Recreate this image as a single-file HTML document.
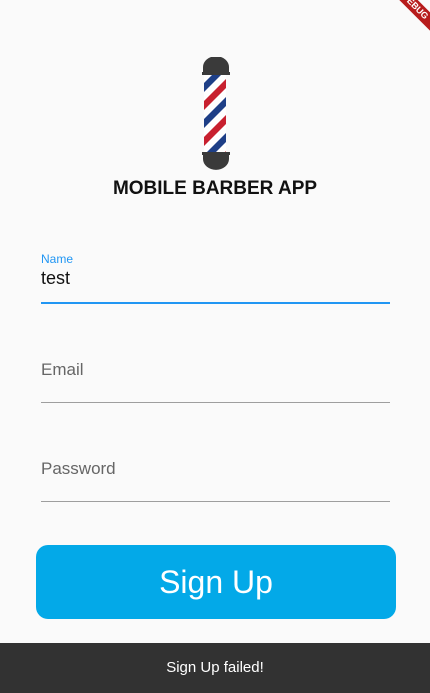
<!DOCTYPE html>
<html><head><style>
body{margin:0;width:430px;height:693px;background:#fafafa;position:relative;overflow:hidden;font-family:"Liberation Sans",sans-serif}
.t{position:absolute;left:0;width:430px;text-align:center;top:178px;font-weight:bold;font-size:19px;color:#111}
.lbl{position:absolute;left:41px;color:#666;font-size:17px}
.line{position:absolute;left:41px;width:349px;height:1px;background:#9e9e9e}
.btn{position:absolute;left:36px;top:545px;width:360px;height:74px;background:#03a9e8;border-radius:12px;color:#fff;font-size:32px;text-align:center;line-height:74px}
.snack{position:absolute;left:0;top:643px;width:430px;height:50px;background:#323232;color:#fff;font-size:15px;text-align:center;line-height:50px}
</style></head><body>
<svg style="position:absolute;left:200px;top:57px" width="32" height="113" viewBox="0 0 32 113">
<defs><clipPath id="c"><rect x="4" y="18" width="22" height="78"/></clipPath></defs>
<path d="M3 16 V10 A12 10 0 0 1 29 10 V16 Z" fill="#3a3a3a"/>
<rect x="2" y="15" width="28" height="3" fill="#3a3a3a"/>
<rect x="4" y="18" width="22" height="78" fill="#fff"/>
<g clip-path="url(#c)">
<polygon points="0,30 26,4 26,13 0,39" fill="#1e3f87"/>
<polygon points="0,48 26,22 26,31 0,57" fill="#c8202f"/>
<polygon points="0,66 26,40 26,49 0,75" fill="#1e3f87"/>
<polygon points="0,84 26,58 26,67 0,93" fill="#c8202f"/>
<polygon points="0,102 26,76 26,85 0,111" fill="#1e3f87"/>
<polygon points="0,120 26,94 26,103 0,129" fill="#c8202f"/>
</g>
<rect x="2" y="95" width="28" height="3" fill="#3a3a3a"/>
<path d="M3 98 H29 V102 A12 10 0 0 1 3 102 Z" fill="#3a3a3a"/>
</svg>
<div class="t">MOBILE BARBER APP</div>
<div style="position:absolute;left:41px;top:252px;font-size:12px;color:#2196f3">Name</div>
<div style="position:absolute;left:41px;top:268px;font-size:18px;color:#111">test</div>
<div class="line" style="top:302px;height:2px;background:#2196f3"></div>
<div class="lbl" style="top:360px">Email</div>
<div class="line" style="top:402px"></div>
<div class="lbl" style="top:459px">Password</div>
<div class="line" style="top:501px"></div>
<div class="btn">Sign Up</div>
<div class="snack">Sign Up failed!</div>
<div style="position:absolute;right:-30px;top:0px;width:90px;height:13px;background:#b71c1c;transform:rotate(45deg);color:#fff;font-size:9px;font-weight:bold;text-align:center;line-height:13px">DEBUG</div>
</body></html>
